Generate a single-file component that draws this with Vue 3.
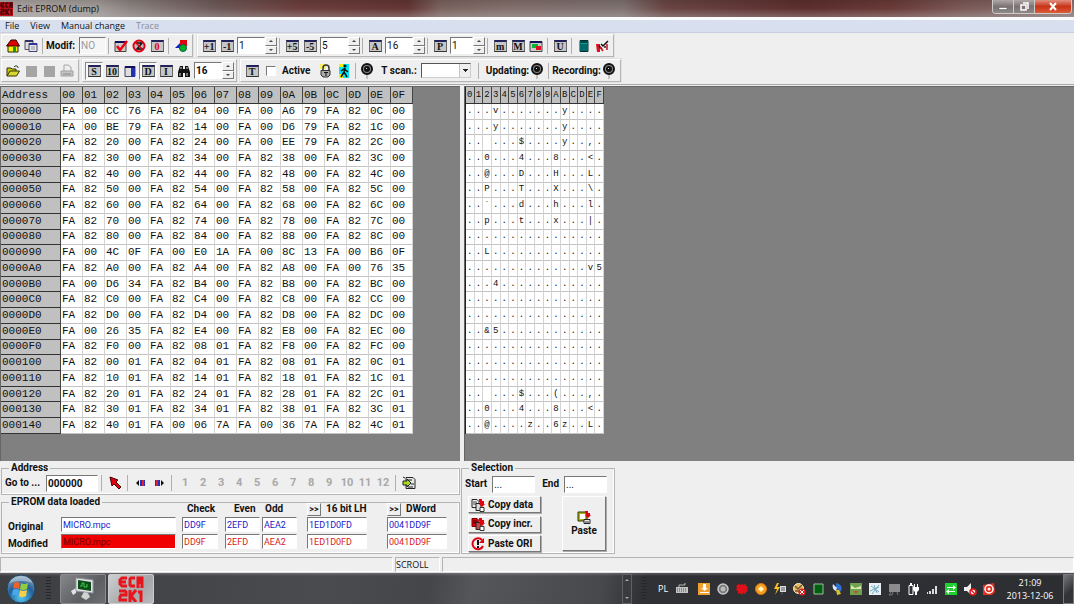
<script setup>
import { computed, reactive } from 'vue';

const form = reactive({
  modif: 'NO',
  active: false,
  scan: '',
  goto: '000000',
  start: '...',
  end: '...'
});

// First toolbar row, one array per band
const topBands = reactive([
  [
    { type: 'icon', icon: 'house', title: 'Home' },
    { type: 'icon', icon: 'pages', title: 'Windows' },
    { type: 'sep' },
    { type: 'field', id: 'modif', label: 'Modif:' },
    { type: 'sep' },
    { type: 'icon', icon: 'check', title: 'Check' },
    { type: 'icon', icon: 'forbid', title: 'Cancel' },
    { type: 'win', letter: '0', red: true },
    { type: 'sep' },
    { type: 'icon', icon: 'shapes', title: 'Shapes' }
  ],
  [
    { type: 'win', letter: '+1' },
    { type: 'win', letter: '-1' },
    { type: 'spin', value: '1', name: 'Step' },
    { type: 'sep' },
    { type: 'win', letter: '+5' },
    { type: 'win', letter: '-5' },
    { type: 'spin', value: '5', name: 'Large step' },
    { type: 'sep' },
    { type: 'win', letter: 'A' },
    { type: 'spin', value: '16', name: 'A' },
    { type: 'sep' },
    { type: 'win', letter: 'P' },
    { type: 'spin', value: '1', name: 'P', narrow: true },
    { type: 'sep' },
    { type: 'win', letter: 'm' },
    { type: 'win', letter: 'M' },
    { type: 'icon', icon: 'colors', title: 'Colors' },
    { type: 'sep' },
    { type: 'win', letter: 'U' },
    { type: 'sep' },
    { type: 'icon', icon: 'calc', title: 'Calculator' },
    { type: 'icon', icon: 'tools', title: 'Tools' }
  ]
]);

// Second toolbar row
const viewBand = reactive([
  { type: 'win', letter: 'S', down: true },
  { type: 'win', letter: '10' },
  { type: 'icon', icon: 'panel', title: 'Panel' },
  { type: 'win', letter: 'D', down: true },
  { type: 'win', letter: 'I' },
  { type: 'icon', icon: 'binoculars', title: 'Find' },
  { type: 'spin', value: '16', name: 'Columns', bold: true }
]);

const bands = computed(() => [topBands, [viewBand]]);

// Bytes of the EPROM, 16 per row
const rows = [
  'FA 00 CC 76 FA 82 04 00 FA 00 A6 79 FA 82 0C 00',
  'FA 00 BE 79 FA 82 14 00 FA 00 D6 79 FA 82 1C 00',
  'FA 82 20 00 FA 82 24 00 FA 00 EE 79 FA 82 2C 00',
  'FA 82 30 00 FA 82 34 00 FA 82 38 00 FA 82 3C 00',
  'FA 82 40 00 FA 82 44 00 FA 82 48 00 FA 82 4C 00',
  'FA 82 50 00 FA 82 54 00 FA 82 58 00 FA 82 5C 00',
  'FA 82 60 00 FA 82 64 00 FA 82 68 00 FA 82 6C 00',
  'FA 82 70 00 FA 82 74 00 FA 82 78 00 FA 82 7C 00',
  'FA 82 80 00 FA 82 84 00 FA 82 88 00 FA 82 8C 00',
  'FA 00 4C 0F FA 00 E0 1A FA 00 8C 13 FA 00 B6 0F',
  'FA 82 A0 00 FA 82 A4 00 FA 82 A8 00 FA 00 76 35',
  'FA 00 D6 34 FA 82 B4 00 FA 82 B8 00 FA 82 BC 00',
  'FA 82 C0 00 FA 82 C4 00 FA 82 C8 00 FA 82 CC 00',
  'FA 82 D0 00 FA 82 D4 00 FA 82 D8 00 FA 82 DC 00',
  'FA 00 26 35 FA 82 E4 00 FA 82 E8 00 FA 82 EC 00',
  'FA 82 F0 00 FA 82 08 01 FA 82 F8 00 FA 82 FC 00',
  'FA 82 00 01 FA 82 04 01 FA 82 08 01 FA 82 0C 01',
  'FA 82 10 01 FA 82 14 01 FA 82 18 01 FA 82 1C 01',
  'FA 82 20 01 FA 82 24 01 FA 82 28 01 FA 82 2C 01',
  'FA 82 30 01 FA 82 34 01 FA 82 38 01 FA 82 3C 01',
  'FA 82 40 01 FA 00 06 7A FA 00 36 7A FA 82 4C 01'
].map((line) => line.split(' '));

const digits = '0123456789ABCDEF'.split('');

const address = (index) =>
  (index * 16).toString(16).toUpperCase().padStart(6, '0');

const toChar = (byte) => {
  const code = parseInt(byte, 16);
  return code >= 32 && code < 127 ? String.fromCharCode(code) : '.';
};

const checksums = [
  { label: 'Original', kind: 'original' },
  { label: 'Modified', kind: 'modified' }
];
const sums = [
  { name: 'Check', value: 'DD9F', cls: 'c-check' },
  { name: 'Even', value: '2EFD', cls: 'c-even' },
  { name: 'Odd', value: 'AEA2', cls: 'c-odd' },
  { name: '16 bit LH', value: '1ED1D0FD', cls: 'c-word', more: true },
  { name: 'DWord', value: '0041DD9F', cls: 'c-dword', more: true }
];

const copyButtons = [
  { icon: 'copy', text: 'Copy data' },
  { icon: 'copyred', text: 'Copy incr.' },
  { icon: 'restore', text: 'Paste ORI' }
];

const tray = [
  'download', 'ring', 'redstar', 'orange', 'power', 'block', 'green', 'globe',
  'photo', 'snow', 'display', 'plug', 'signal', 'sync', 'mute', 'opera'
];
</script>

<template>
  <div class="desktop">
    <!-- Shared icon shapes -->
    <svg class="defs" width="0" height="0" aria-hidden="true">
      <symbol id="i-logo" viewBox="0 0 26 26">
        <g fill="none" stroke="currentColor" stroke-width="3">
          <path d="M9 2H4L2 4v4l2 2h5M2 6h6M17 2h-4l-1 1v6l1 1h4M20 12V2h4v10M22 2v6" />
          <path d="M1 15h6l1 1v3H3l-1 2v3h7M12 14v12M18 14l-5 6 5 6M20 16h3v10" />
        </g>
      </symbol>
      <symbol id="i-house" viewBox="0 0 14 14">
        <path d="M2 6h10v7H2z" fill="#ffee00" stroke="#222" />
        <path d="M0.500 7L5 1h5l3.500 6z" fill="#e00000" stroke="#300" />
        <path d="M7 8h3v5H7z" fill="#0a9a20" />
      </symbol>
      <symbol id="i-pages" viewBox="0 0 14 14">
        <path d="M1 1.500h8v9H1z" fill="#ddd" stroke="#555" />
        <path d="M1 1h8v2H1z" fill="#336" />
        <path d="M5 4.500h8v8H5z" fill="#e4e4f0" stroke="#446" />
        <path d="M5 4h8v2H5z" fill="#339" />
        <path d="M7 8h4M7 10h4" stroke="#999" />
      </symbol>
      <symbol id="i-check" viewBox="0 0 14 14">
        <path d="M1 2.500h11v10H1z" fill="#ccc" stroke="#444" />
        <path d="M1 2h11v2H1z" fill="#115" />
        <path d="M3 7l3 4 7-9" fill="none" stroke="#f00010" stroke-width="2.500" />
      </symbol>
      <symbol id="i-forbid" viewBox="0 0 14 14">
        <path d="M3 2h8v10H3z" fill="#bbb" />
        <path d="M4 4h6l-5 6h6" fill="none" stroke="#111" stroke-width="1.500" />
        <circle cx="7" cy="7" r="5.500" fill="none" stroke="#e00010" stroke-width="2" />
        <path d="M3 3l8 8" stroke="#e00010" stroke-width="1.500" />
      </symbol>
      <symbol id="i-shapes" viewBox="0 0 14 14">
        <path d="M6 1h7v6H6z" fill="#e00010" />
        <path d="M1 9l5-5v5z" fill="#1020c0" />
        <circle cx="9" cy="9" r="3.500" fill="#00b020" stroke="#064" />
      </symbol>
      <symbol id="i-colors" viewBox="0 0 14 14">
        <path d="M1 2.500h12v10H1z" fill="#ccc" stroke="#444" />
        <path d="M1 2h12v2H1z" fill="#115" />
        <path d="M3 5h6v4H3z" fill="#00b830" />
        <path d="M7 7h5v4H7z" fill="#e01020" />
      </symbol>
      <symbol id="i-calc" viewBox="0 0 14 14">
        <path d="M3 1.500h8v11H3z" fill="#00a0a0" stroke="#033" />
        <path d="M4 2h6v2H4z" fill="#044" />
        <path d="M5 5v7M7 5v7M9 5v7" stroke="#033" />
      </symbol>
      <symbol id="i-tools" viewBox="0 0 14 14">
        <path d="M1 5h4v8H2z" fill="#e01020" />
        <path d="M4 7l3 3M6 5l2 2 5-5" fill="none" stroke="#111" stroke-width="1.500" />
        <path d="M5 8l3 4M12 5v6" stroke="#c01020" stroke-width="1.500" />
        <path d="M9 7h2v2H9z" fill="#555" />
      </symbol>
      <symbol id="i-open" viewBox="0 0 14 14">
        <path d="M1 12V4h4l1 1h4v2" fill="#c8c800" stroke="#333300" />
        <path d="M1 12l3-5h9.500l-3 5z" fill="#d8d830" stroke="#333300" />
        <path d="M8 3c2-2 4-1 4 1" fill="none" stroke="#111" />
      </symbol>
      <symbol id="i-save" viewBox="0 0 14 14">
        <path d="M2 2h11v11H2z" fill="#a5a5a5" />
      </symbol>
      <symbol id="i-print" viewBox="0 0 14 14">
        <path d="M4 7V1h4l3 2v4" fill="#eee" stroke="#a5a5a5" />
        <path d="M1 7h12v5H1z" fill="#c4c4c4" stroke="#a0a0a0" />
        <path d="M3 10h8" stroke="#888" />
      </symbol>
      <symbol id="i-panel" viewBox="0 0 14 14">
        <path d="M2 2.500h10v10H2z" fill="#ddd" stroke="#446" />
        <path d="M2 2h10v2H2z" fill="#115" />
        <path d="M8 4h4v9H8z" fill="#2230b0" />
      </symbol>
      <symbol id="i-binoculars" viewBox="0 0 14 14">
        <path d="M3 2h3v3h2V2h3l2 6v5H8V9H6v4H1V8z" fill="#111" />
        <path d="M3 9v3M10 9v3M4 3v2M10 3v2" stroke="#ddd" />
      </symbol>
      <symbol id="i-lock" viewBox="0 0 14 14">
        <path d="M1 0h6v5H1z" fill="#f4f060" />
        <path d="M4 7V4a3 3 0 0 1 6 0v2" fill="none" stroke="#333" stroke-width="1.500" />
        <path d="M2 6.500h9V11l-2 2H4l-2-2z" fill="#aaa" stroke="#333" />
        <path d="M5 8.500h4M7 8v4" stroke="#111" />
      </symbol>
      <symbol id="i-walk" viewBox="0 0 14 14">
        <path d="M2 0h10v14H2z" fill="#00e8f8" />
        <path d="M2 0h4v3H2zM2 10h4v4H2z" fill="#f0f000" />
        <circle cx="8" cy="2" r="1.500" fill="#111" />
        <path d="M8 4L7 8l3 5M7 8l-3 5M4 7l3-2 4 3" fill="none" stroke="#111" stroke-width="1.500" />
      </symbol>
      <symbol id="i-dial" viewBox="0 0 14 16">
        <circle cx="7" cy="6" r="5" fill="#888" stroke="#111" stroke-width="2" />
        <circle cx="7" cy="6" r="3" fill="#111" />
        <path d="M6 5h1v1H6z" fill="#ddd" />
        <path d="M7 12v4" stroke="#999" />
      </symbol>
      <symbol id="i-arrow" viewBox="0 0 14 14">
        <path d="M2 1l8 3-2 2 5 5-2 2-5-5-2 2z" fill="#e00010" stroke="#400" />
      </symbol>
      <symbol id="i-prev" viewBox="0 0 14 14">
        <path d="M5 4v6L2 7z" fill="#111" />
        <path d="M6 4h2v6H6z" fill="#2230c0" />
        <path d="M8 4h2v6H8z" fill="#e02030" />
        <path d="M10 4h1v6h-1z" fill="#2230c0" />
      </symbol>
      <symbol id="i-next" viewBox="0 0 14 14">
        <path d="M9 4v6l3-3z" fill="#111" />
        <path d="M6 4h2v6H6z" fill="#2230c0" />
        <path d="M4 4h2v6H4z" fill="#e02030" />
        <path d="M3 4h1v6H3z" fill="#2230c0" />
      </symbol>
      <symbol id="i-note" viewBox="0 0 14 14">
        <path d="M4 1.500h7l2 2v9H4z" fill="#e8e8e8" stroke="#222" />
        <path d="M6 4h4M6 11h5M9 8h3M1 1l2 1" stroke="#222" />
        <path d="M1 5h4V3l4 4-4 4V9H1z" fill="#a8d820" stroke="#222" />
      </symbol>
      <symbol id="i-copy" viewBox="0 0 14 14">
        <path d="M1 1.500h5l2 2v6H1z" fill="#eee" stroke="#222" />
        <path d="M2 4h4M2 6h4" stroke="#444" />
        <path d="M5 5.500h5v7H5z" fill="#ddd" stroke="#222" />
        <path d="M8 1h3v2h2v3h1l-3 3-3-3h1V4H8z" fill="#e00010" />
        <path d="M9 9.500h4v4H9z" fill="#fff" stroke="#333" />
      </symbol>
      <symbol id="i-copyred" viewBox="0 0 14 14">
        <path d="M1 1.500h5l2 2v6H1z" fill="#e00010" stroke="#700" />
        <path d="M2 4h4M2 6h4" stroke="#300" />
        <path d="M5 5.500h5v7H5z" fill="#c05050" stroke="#222" />
        <path d="M8 1h3v2h2v3h1l-3 3-3-3h1V4H8z" fill="#e00010" />
        <path d="M9 9.500h4v4H9z" fill="#fff" stroke="#333" />
      </symbol>
      <symbol id="i-restore" viewBox="0 0 14 14">
        <path d="M11 3a5.500 5.500 0 1 0 1 6" fill="none" stroke="#e00010" stroke-width="2" />
        <path d="M13 1v5H8z" fill="#e00010" />
        <path d="M7 3v5M7 9v2" stroke="#111" stroke-width="2" />
      </symbol>
      <symbol id="i-paste" viewBox="0 0 14 14">
        <path d="M1 2h9v9H1z" fill="#a8b020" stroke="#333300" />
        <path d="M3 4h5v5H3z" fill="#fff" />
        <path d="M8 1h3v2h2v2h1l-3 3-3-3h1z" fill="#e00010" />
        <path d="M7 9.500h6v4H7z" fill="#eee" stroke="#222" />
        <path d="M8 12h4" stroke="#333" />
      </symbol>

      <!-- Tray icons -->
      <symbol id="t-keyboard" viewBox="0 0 14 14">
        <path d="M1 5h12v6H1z" fill="#c4c4c4" />
        <path d="M2 7h10M2 9h10" stroke="#555" stroke-dasharray="1 1" />
        <path d="M4 5V3h6V1" fill="none" stroke="#b8b8b8" />
      </symbol>
      <symbol id="t-download" viewBox="0 0 14 14">
        <path d="M1 1h12v12H1z" fill="#f0a030" />
        <path d="M6 2h3v4h2L7.500 9 4 6h2zM3 10h9v1H3z" fill="#fff" />
      </symbol>
      <symbol id="t-ring" viewBox="0 0 14 14">
        <circle cx="7" cy="7" r="5" fill="#777" stroke="#c8c8c8" stroke-width="1.500" />
        <circle cx="7" cy="7" r="2.500" fill="#bbb" />
      </symbol>
      <symbol id="t-redstar" viewBox="0 0 14 14">
        <path d="M7 1l1 2 3-1v2l2 1-1 2 1 2-2 1v2l-3-1-1 2-2-2-2 1v-3l-2-1 1-2-1-2 2-1V2l3 1z" fill="#e01018" />
      </symbol>
      <symbol id="t-orange" viewBox="0 0 14 14">
        <circle cx="7" cy="7" r="5.500" fill="#f8a020" stroke="#d87808" />
        <path d="M7 4l3 3-3 3-3-3z" fill="#fff6c0" />
      </symbol>
      <symbol id="t-power" viewBox="0 0 14 14">
        <path d="M4 1L1 7h3l-2 6 5-8H4l2-4z" fill="#f8c020" />
        <path d="M7 4h6v6H7z" fill="#ddd" />
        <path d="M8 6h4M8 8h4M9 10v3" stroke="#556" />
      </symbol>
      <symbol id="t-block" viewBox="0 0 14 14">
        <circle cx="6.500" cy="6.500" r="5" fill="#e8b860" stroke="#fff0d0" />
        <path d="M3 4l3 3 4-4M3 9h5" fill="none" stroke="#753" stroke-width="1.500" />
        <circle cx="10" cy="10" r="3.500" fill="#d82020" />
        <path d="M8 8l4 4M12 8l-4 4" stroke="#fff" />
      </symbol>
      <symbol id="t-green" viewBox="0 0 14 14">
        <path d="M3 2h9v10H3z" fill="#006010" stroke="#a0c0a0" />
      </symbol>
      <symbol id="t-globe" viewBox="0 0 14 14">
        <path d="M6 1c6 1 7 6 4 9L6 6z" fill="#3070d0" />
        <path d="M3 2c-1 3 0 6 3 7l1-3z" fill="#d8e8f8" />
        <path d="M6 8h3l2 4-4 1z" fill="#d8c030" />
      </symbol>
      <symbol id="t-photo" viewBox="0 0 14 14">
        <path d="M1 1h12v12H1z" fill="#70a050" />
        <path d="M2 3l4 3 6-2v3H2z" fill="#d8e8b0" />
        <path d="M4 9h6l-3 3z" fill="#a86030" />
      </symbol>
      <symbol id="t-snow" viewBox="0 0 14 14">
        <path d="M1 1h12v12H1z" fill="#e8f0f4" />
        <path d="M2 9l9-4M6 3l3 8M3 4l8 6M11 3l-7 9" stroke="#70a8c0" />
      </symbol>
      <symbol id="t-display" viewBox="0 0 14 14">
        <path d="M2 2h11v8H2z" fill="#8c8c8c" />
        <path d="M4 10l-2 3h3l1-3M10 10l1 3" fill="none" stroke="#777" />
      </symbol>
      <symbol id="t-plug" viewBox="0 0 14 14">
        <path d="M3 3.500h4v9H3z" fill="none" stroke="#fff" />
        <path d="M4 1h2v2H4zM7 5h6v3l-2 2v3H9v-3L7 8z" fill="#fff" />
        <path d="M8 2h1v3H8zM11 2h1v3h-1z" fill="#fff" />
      </symbol>
      <symbol id="t-signal" viewBox="0 0 14 14">
        <path d="M2 10h1v2H2zM4 9h2v3H4zM7 7h2v5H7zM10 4h2v8h-2z" fill="#ddd" />
      </symbol>
      <symbol id="t-sync" viewBox="0 0 14 14">
        <path d="M1 1h12v12H1z" fill="#20d030" />
        <path d="M3 5h6V3l3 2.500L9 8V6H3zM11 9H5V7L2 9.500 5 12v-2h6z" fill="#fff" />
      </symbol>
      <symbol id="t-mute" viewBox="0 0 14 14">
        <path d="M1 5h3l4-4v12L4 9H1z" fill="#eee" />
        <circle cx="10" cy="10" r="3" fill="#fff" stroke="#e01818" stroke-width="1.500" />
        <path d="M8 8l4 4" stroke="#e01818" stroke-width="1.500" />
      </symbol>
      <symbol id="t-opera" viewBox="0 0 14 14">
        <path d="M1 3l11-2 1 9-3 3H1z" fill="#e83020" />
        <circle cx="7" cy="7" r="4" fill="#e83020" stroke="#fff" stroke-width="1.500" />
        <circle cx="7" cy="7" r="1.500" fill="#fff" />
      </symbol>
    </svg>

    <header class="title">
      <span class="app-icon"><svg width="13" height="13"><use href="#i-logo" /></svg></span>
      <span class="title-text">Edit EPROM (dump)</span>
      <div class="window-buttons">
        <button aria-label="Minimize"><svg width="10" height="10"><path d="M1 5.500h8v2H1z" fill="#fff" stroke="#555" stroke-width="0.500" /></svg></button>
        <button aria-label="Restore">
          <svg width="10" height="10"><path d="M4 1h5v6M2 3h5v5H2z" fill="none" stroke="#fff" stroke-width="1.500" /></svg>
        </button>
        <button class="close" aria-label="Close">
          <svg width="10" height="9"><path d="M2 1l6 7M8 1L2 8" stroke="#fff" stroke-width="2" /></svg>
        </button>
      </div>
    </header>

    <nav class="menu">
      <button>File</button>
      <button>View</button>
      <button>Manual change</button>
      <button disabled>Trace</button>
    </nav>

    <section class="toolbars">
      <div v-for="(row, r) in bands" :key="r" class="bar-row">
        <div v-if="r === 1" class="band">
          <button class="tool" aria-label="Open"><svg width="14" height="14"><use href="#i-open" /></svg></button>
          <button class="tool" aria-label="Save" disabled><svg width="14" height="14"><use href="#i-save" /></svg></button>
          <button class="tool" aria-label="Save as" disabled><svg width="14" height="14"><use href="#i-save" /></svg></button>
          <button class="tool" aria-label="Print" disabled><svg width="14" height="14"><use href="#i-print" /></svg></button>
        </div>
        <div v-for="(band, b) in row" :key="b" class="band">
          <template v-for="(item, i) in band" :key="i">
            <i v-if="item.type === 'sep'" class="sep"></i>
            <button v-else-if="item.type === 'icon'" class="tool" :aria-label="item.title">
              <svg width="14" height="14"><use :href="'#i-' + item.icon" /></svg>
            </button>
            <button v-else-if="item.type === 'win'" class="tool" :class="{ down: item.down }">
              <span class="win" :class="{ red: item.red }">{{ item.letter }}</span>
            </button>
            <span v-else-if="item.type === 'field'" class="field">
              <label :for="item.id">{{ item.label }}</label>
              <input :id="item.id" v-model="form.modif" class="sunken gray" disabled />
            </span>
            <span v-else class="spin" :class="{ narrow: item.narrow, bold: item.bold }">
              <input v-model="item.value" class="sunken" :aria-label="item.name" />
              <span class="arrows">
                <button :aria-label="item.name + ' up'"><i class="tri up"></i></button>
                <button :aria-label="item.name + ' down'"><i class="tri"></i></button>
              </span>
            </span>
          </template>
        </div>
        <div v-if="r === 1" class="band">
          <button class="tool"><span class="win">T</span></button>
          <label class="check"><input v-model="form.active" type="checkbox" />Active</label>
          <button class="tool" aria-label="Lock"><svg width="14" height="14"><use href="#i-lock" /></svg></button>
          <button class="tool" aria-label="Run"><svg width="14" height="14"><use href="#i-walk" /></svg></button>
          <i class="sep"></i>
          <svg class="dial" width="14" height="16"><use href="#i-dial" /></svg>
          <label for="scan" class="scan-label">T scan.:</label>
          <select id="scan" v-model="form.scan" class="sunken"><option value=""></option></select>
          <i class="sep wide"></i>
          <span class="lamp">Updating:<svg class="dial" width="14" height="16"><use href="#i-dial" /></svg></span>
          <i class="sep"></i>
          <span class="lamp">Recording:<svg class="dial" width="14" height="16"><use href="#i-dial" /></svg></span>
        </div>
      </div>
    </section>

    <main class="panes">
      <div class="pane hex-pane">
        <table class="hex">
          <thead>
            <tr>
              <th class="address">Address</th>
              <th v-for="d in digits" :key="d">0{{ d }}</th>
            </tr>
          </thead>
          <tbody>
            <tr v-for="(row, r) in rows" :key="r">
              <th class="address">{{ address(r) }}</th>
              <td v-for="(byte, c) in row" :key="c">{{ byte }}</td>
            </tr>
          </tbody>
        </table>
      </div>
      <div class="pane">
        <table class="ascii">
          <thead>
            <tr><th v-for="d in digits" :key="d">{{ d }}</th></tr>
          </thead>
          <tbody>
            <tr v-for="(row, r) in rows" :key="r">
              <td v-for="(byte, c) in row" :key="c">{{ toChar(byte) }}</td>
            </tr>
          </tbody>
        </table>
      </div>
    </main>

    <section class="bottom">
      <div class="left">
        <fieldset>
          <legend>Address</legend>
          <div class="goto">
            <label for="goto">Go to ...</label>
            <input id="goto" v-model="form.goto" class="sunken" />
            <i class="sep"></i>
            <button class="tool" aria-label="Go"><svg width="14" height="14"><use href="#i-arrow" /></svg></button>
            <i class="sep"></i>
            <button class="tool" aria-label="Previous"><svg width="14" height="14"><use href="#i-prev" /></svg></button>
            <button class="tool" aria-label="Next"><svg width="14" height="14"><use href="#i-next" /></svg></button>
            <i class="sep"></i>
            <button v-for="n in 12" :key="n" class="tool mark" disabled>{{ n }}</button>
            <i class="sep"></i>
            <button class="tool" aria-label="Note"><svg width="14" height="14"><use href="#i-note" /></svg></button>
          </div>
        </fieldset>
        <fieldset>
          <legend>EPROM data loaded</legend>
          <div class="sums">
            <div class="sum-row head">
              <span class="c-label"></span>
              <span class="c-file"></span>
              <span v-for="s in sums" :key="s.name" :class="s.cls">
                <button v-if="s.more" class="more" :aria-label="'More ' + s.name">&gt;&gt;</button>{{ s.name }}
              </span>
            </div>
            <div v-for="line in checksums" :key="line.kind" class="sum-row" :class="line.kind">
              <label class="c-label" :for="line.kind">{{ line.label }}</label>
              <span class="c-file"><input :id="line.kind" class="sunken" value="MICRO.mpc" readonly /></span>
              <span v-for="s in sums" :key="s.name" :class="s.cls">
                <input class="sunken" :value="s.value" :aria-label="line.label + ' ' + s.name" readonly />
              </span>
            </div>
          </div>
        </fieldset>
      </div>

      <fieldset class="selection">
        <legend>Selection</legend>
        <div class="range">
          <label for="start">Start</label>
          <input id="start" v-model="form.start" class="sunken" />
          <label for="end" class="end">End</label>
          <input id="end" v-model="form.end" class="sunken" />
        </div>
        <div class="actions">
          <div class="copies">
            <button v-for="b in copyButtons" :key="b.text" class="push">
              <svg width="14" height="14"><use :href="'#i-' + b.icon" /></svg>{{ b.text }}
            </button>
          </div>
          <button class="push paste">
            <svg width="14" height="14"><use href="#i-paste" /></svg>Paste
          </button>
        </div>
      </fieldset>
    </section>

    <footer class="status">
      <span class="cell first"></span>
      <span class="cell scroll">SCROLL</span>
      <span class="cell rest"></span>
    </footer>

    <div class="taskbar">
      <button class="orb" aria-label="Start">
        <svg width="32" height="30" viewBox="0 0 32 30">
          <defs>
            <radialGradient id="orb" cx="50%" cy="80%" r="75%">
              <stop offset="0" stop-color="#58c8f0" />
              <stop offset="0.600" stop-color="#245f98" />
              <stop offset="1" stop-color="#7fa0b8" />
            </radialGradient>
          </defs>
          <circle cx="16" cy="15" r="14" fill="url(#orb)" stroke="#20405c" />
          <path d="M9 9q3-2 6 0l-1 6q-3-2-6 0z" fill="#f06028" />
          <path d="M16 9q3 2 7 0l-1 6q-4 2-7 0z" fill="#90cc40" />
          <path d="M8 16q3-2 6 0l-1 6q-3-2-6 0z" fill="#48a8e8" />
          <path d="M15 16q3 2 7 0l-1 6q-4 2-7 0z" fill="#fcd040" />
          <path d="M4 9Q8 2 16 2t12 7q-12-4-24 0z" fill="#fff" opacity="0.350" />
        </svg>
      </button>
      <i class="grip"></i>
      <button class="task" aria-label="Remote terminal">
        <svg width="26" height="26" viewBox="0 0 26 26">
          <path d="M1 15l5-3v5l-3 2z" fill="#e0e4e0" />
          <path d="M6 2l17 2v13L6 15z" fill="#e0e4e0" stroke="#99a" />
          <path d="M8 4l13 2v9L8 13z" fill="#0c4c18" />
          <path d="M10 10h2V7h2v4h3V8" fill="none" stroke="#38d048" />
          <path d="M14 16l4 1 2 4-4 3-5-3z" fill="#d0d4d0" />
        </svg>
      </button>
      <button class="task active" aria-label="ECM 2001">
        <svg width="26" height="26"><use href="#i-logo" /></svg>
      </button>
      <span class="gap"></span>
      <div class="scroller"><i class="tri up"></i><i class="tri"></i></div>
      <i class="grip"></i>
      <span class="lang">PL</span>
      <svg class="keyboard" width="14" height="14"><use href="#t-keyboard" /></svg>
      <div class="tray">
        <svg v-for="name in tray" :key="name" width="14" height="14"><use :href="'#t-' + name" /></svg>
      </div>
      <div class="clock"><span>21:09</span><span>2013-12-06</span></div>
      <button class="show-desktop" aria-label="Show desktop"></button>
    </div>
  </div>
</template>

<style>
body {
  margin: 0;
  overflow: hidden;
}
</style>

<style scoped>
.desktop {
  display: flex;
  flex-direction: column;
  height: 100vh;
  background: #efefef;
  color: #111;
  font: bold 10px/12px Roboto, "Liberation Sans", sans-serif;
}

.desktop * {
  box-sizing: border-box;
}

.defs {
  position: absolute;
}

button {
  margin: 0;
  padding: 0;
  border: 0;
  background: none;
  color: inherit;
  font: inherit;
  display: flex;
  align-items: center;
  justify-content: center;
}

svg {
  display: block;
  flex: none;
}

/* Title bar */
.title {
  display: flex;
  height: 17px;
  flex: none;
  background:
    linear-gradient(rgba(20, 10, 10, 0.15), rgba(200, 190, 190, 0) 50%, rgba(190, 190, 190, 0.35)),
    linear-gradient(90deg, #aca7a4, #a39d9a 9%, #8d8583 12%, #6e5a58 20%, #6c3f3d 28%, #643634 38%, #7c6460 41%, #83706c 47%, #807472 58%, #6a4644 62%, #5d2f2e 75%, #6a3b39 83%, #7d5c5a 90%, #8a7674);
}

.app-icon {
  width: 13px;
  height: 14px;
  margin-top: 2px;
  background: #c4101a;
  color: #4a0408;
}

.title-text {
  margin-left: 4px;
  font: 9px/17px "Open Sans", sans-serif;
}

.window-buttons {
  display: flex;
  height: 14px;
  margin-left: auto;
  margin-right: 2px;
  border: 1px solid #ccc;
  border-top: 0;
  border-radius: 0 0 4px 4px;
  overflow: hidden;
}

.window-buttons button {
  width: 21px;
  background: linear-gradient(#b0a8a8, #7b7373 50%, #8e8887);
  border-right: 1px solid #ccc;
}

.window-buttons .close {
  width: 36px;
  border-right: 0;
  background: linear-gradient(#e09080, #c83418 50%, #dd5c38);
}

/* Menu */
.menu {
  display: flex;
  gap: 11px;
  height: 16px;
  flex: none;
  padding-left: 5px;
  border-top: 3px solid #fbfcfe;
  border-bottom: 1px solid #c9cfdf;
  background: #d8e0f0;
}

.menu button {
  font: 9px/12px "Open Sans", sans-serif;
}

.menu button:disabled {
  color: #8a8f98;
}

/* Toolbars */
.toolbars {
  flex: none;
  padding: 1px 1px 0;
  border-bottom: 1px solid #a8a8a8;
}

.bar-row {
  display: flex;
  gap: 4px;
  height: 25px;
}

.bar-row:last-child {
  gap: 3px;
}

.band {
  display: flex;
  align-items: center;
  height: 23px;
  padding: 0 2px;
  border: 1px solid;
  border-color: #fff #b4b4b4 #b4b4b4 #fff;
  outline: 1px solid #e2e2e2;
}

.tool {
  width: 18px;
  height: 18px;
  flex: none;
}

.tool.down {
  background: #f8f8f8;
  border: 1px solid;
  border-color: #888 #fff #fff #888;
}

.win {
  width: 13px;
  height: 12px;
  flex: none;
  border: 1px solid #666;
  border-top: 2px solid #22225c;
  border-bottom-color: #333;
  background: #c6c6c6;
  font: bold 10px/9px "Liberation Serif", serif;
  text-align: center;
  overflow: hidden;
}

.win.red {
  color: #e00010;
}

.sep {
  width: 1px;
  height: 16px;
  flex: none;
  margin: 0 3px 0 2px;
  background: #b0b0b0;
}

.sep.wide {
  margin: 0 7px;
}

.sunken {
  min-width: 0;
  margin: 0;
  padding: 0 0 0 1px;
  border: 1px solid;
  border-color: #777 #fff #fff #777;
  border-radius: 0;
  background: #fff;
  font: 10px/12px Roboto, sans-serif;
  color: #111;
}

.field {
  display: flex;
  align-items: center;
  gap: 4px;
}

.field .sunken {
  width: 27px;
  height: 17px;
  background: #f6f6f6;
}

.sunken.gray {
  color: #999;
}

.spin {
  display: flex;
  width: 40px;
  height: 17px;
  margin-left: 1px;
}

.spin.narrow {
  width: 35px;
}

.spin .sunken {
  flex: 1;
  width: 20px;
}

.spin.bold .sunken {
  font-weight: bold;
}

.arrows {
  display: flex;
  flex-direction: column;
  width: 12px;
}

.arrows button {
  flex: 1;
  border: 1px solid;
  border-color: #fff #777 #777 #fff;
}

.tri {
  border: 2px solid transparent;
  border-bottom-width: 0;
  border-top-color: #444;
}

.tri.up {
  border-top-width: 0;
  border-bottom: 2px solid #444;
}

.check {
  display: flex;
  align-items: center;
  gap: 6px;
  margin: 0 7px 0 5px;
}

.check input {
  appearance: none;
  width: 10px;
  height: 10px;
  margin: 0;
  border: 1px solid;
  border-color: #777 #fff #fff #777;
  background: #fff;
}

.dial {
  margin: 0 2px 0 1px;
}

.scan-label {
  margin: 0 4px 0 5px;
}

select.sunken {
  appearance: none;
  width: 50px;
  height: 15px;
  border-color: #555 #ccc #ccc #555;
  background: linear-gradient(#222, #222) 41px 5px / 5px 1px no-repeat,
    linear-gradient(#222, #222) 42px 6px / 3px 1px no-repeat,
    linear-gradient(#222, #222) 43px 7px / 1px 1px no-repeat,
    linear-gradient(90deg, #fff 37px, #999 37px, #eee 38px);
}

.lamp {
  display: flex;
  align-items: center;
}

/* Hex and character grids */
.panes {
  display: flex;
  flex: 1;
  min-height: 0;
  padding-top: 1px;
  gap: 4px;
}

.pane {
  flex: 1;
  background: #808080;
  border-left: 1px solid #666;
  border-top: 1px solid #666;
  overflow: hidden;
}

.hex-pane {
  flex: none;
  width: 460px;
}

table {
  table-layout: fixed;
  border-collapse: separate;
  border-spacing: 0;
  height: 347px;
  font: 11px/13px "Liberation Mono", monospace;
}

.hex {
  width: 412px;
}

.ascii {
  width: 139px;
  border-left: 1px solid #222;
  font-size: 9px;
}

th,
td {
  height: 15px;
  padding: 0 0 0 1px;
  text-align: left;
  overflow: hidden;
}

td {
  background: #fff;
  border-right: 1px solid #d4d4d4;
  border-bottom: 1px solid #c4c4c4;
}

.ascii th,
.ascii td {
  padding: 0;
  text-align: center;
}

th {
  background: #c0c0c0;
  border-right: 1px solid #444;
  border-bottom: 1px solid #333;
  font-weight: normal;
}

thead th {
  height: 17px;
}

.address {
  width: 60px;
}

/* Bottom forms */
.bottom {
  display: flex;
  flex: none;
  gap: 1px;
  height: 94px;
  padding: 1px 1px 0;
}

.left {
  display: flex;
  flex-direction: column;
  gap: 1px;
  width: 459px;
}

fieldset {
  min-width: 0;
  margin: 0;
  padding: 0 3px 0;
  border: 1px solid #b4b4b4;
  box-shadow: inset -1px -1px #fff;
}

.left fieldset:first-child {
  height: 33px;
}

.left fieldset:last-child {
  height: 58px;
}

legend {
  margin-left: 4px;
  padding: 0 2px;
  line-height: 12px;
}

.goto {
  display: flex;
  align-items: center;
  height: 18px;
}

.goto .sunken {
  width: 52px;
  height: 17px;
  margin-left: 6px;
  font-weight: bold;
}

.goto .sep {
  margin: 0 4px 0 3px;
}

.mark {
  color: #a8a8a8;
  font-size: 11px;
}

.sums {
  margin-top: -6px;
}

.sum-row {
  display: flex;
  height: 17px;
  align-items: center;
}

.sum-row.head {
  height: 14px;
}

.head > span {
  display: flex;
  align-items: center;
  white-space: nowrap;
}

.sum-row .sunken {
  display: block;
  height: 15px;
  width: 100%;
  font-size: 9px;
}

.c-label {
  width: 56px;
  padding: 4px 0 0 3px;
}

.c-file {
  width: 121px;
  padding-right: 6px;
}

.c-check {
  width: 43px;
  padding-right: 7px;
}

.c-even {
  width: 37px;
  padding-right: 2px;
}

.c-odd {
  width: 45px;
  padding-right: 10px;
}

.c-word {
  width: 80px;
  padding-right: 20px;
}

.c-dword {
  width: 60px;
}

.head .c-check {
  padding: 0 0 0 5px;
}

.head .c-even {
  padding: 0 0 0 9px;
}

.head .c-odd {
  padding: 0 0 0 3px;
}

.more {
  width: 14px;
  height: 13px;
  margin-right: 5px;
  border: 1px solid;
  border-color: #fff #777 #777 #fff;
  font-size: 9px;
}

.original .sunken {
  color: #2020c8;
}

.modified .sunken {
  color: #d82020;
}

.modified .c-file .sunken {
  background: #f00000;
  color: #700000;
}

.selection {
  width: 154px;
  height: 92px;
}

.range {
  display: flex;
  align-items: center;
  height: 20px;
}

.range .sunken {
  width: 43px;
  height: 17px;
  margin-left: 5px;
}

.end {
  margin-left: 7px;
}

.actions {
  display: flex;
  gap: 21px;
  height: 56px;
  margin-top: 2px;
  padding-left: 3px;
}

.copies {
  display: flex;
  flex-direction: column;
  justify-content: space-between;
  width: 73px;
}

.push {
  height: 17px;
  gap: 3px;
  justify-content: flex-start;
  padding-left: 2px;
  border: 1px solid;
  border-color: #fff #777 #777 #fff;
  box-shadow: 1px 1px #aaa;
  white-space: nowrap;
}

.paste {
  flex-direction: column;
  justify-content: center;
  width: 44px;
  height: 55px;
  padding: 0;
  gap: 1px;
}

/* Status bar */
.status {
  display: flex;
  flex: none;
  gap: 2px;
  height: 18px;
  padding-top: 2px;
  border-bottom: 1px solid #ddd;
}

.cell {
  border: 1px solid;
  border-color: #b4b4b4 #fff #fff #b4b4b4;
  font: 9px/13px "Open Sans", sans-serif;
}

.first {
  width: 393px;
}

.scroll {
  width: 45px;
}

.rest {
  flex: 1;
}

/* Taskbar */
.taskbar {
  display: flex;
  align-items: center;
  flex: none;
  height: 31px;
  background:
    linear-gradient(rgba(255, 255, 255, 0.2), rgba(255, 255, 255, 0) 3px),
    linear-gradient(100deg, #3c3e42, #4a4b4f 30%, #45464a 40%, #55565a 44%, #47484c 56%, #303134 60%, #2d2e31);
  color: #fff;
  font: 9px/13px "Open Sans", sans-serif;
}

.orb {
  margin-left: 5px;
}

.grip {
  width: 5px;
  height: 24px;
  margin: 0 9px;
  background: repeating-linear-gradient(#26272a 0 1px, transparent 1px 3px);
}

.task {
  width: 46px;
  height: 30px;
  margin-right: 2px;
  border: 1px solid #8a8c90;
  border-radius: 2px;
  background: linear-gradient(135deg, #85878a, #5c5e61 60%, #6c6e70);
}

.task.active {
  border-color: #ccc;
  background: linear-gradient(135deg, #cdcfd0, #a4a6a8 60%, #b8babb);
  color: #e8141c;
}

.gap {
  flex: 1;
}

.scroller {
  display: flex;
  flex-direction: column;
  align-items: center;
  justify-content: space-between;
  width: 10px;
  height: 30px;
  padding: 4px 0;
  border: 1px solid #606164;
  background: #3a3b3e;
}

.scroller .tri {
  border-top-color: #aaa;
  border-bottom-color: #aaa;
}

.lang {
  width: 17px;
  margin-left: 3px;
}

.keyboard {
  margin-right: 4px;
}

.tray {
  display: flex;
  gap: 5px;
  padding: 0 1px 0 4px;
}

.clock {
  display: flex;
  flex-direction: column;
  align-items: center;
  width: 66px;
}

.show-desktop {
  width: 11px;
  height: 30px;
  border: 1px solid #77787a;
  background: linear-gradient(135deg, #77787a, #333437 60%);
}
</style>
